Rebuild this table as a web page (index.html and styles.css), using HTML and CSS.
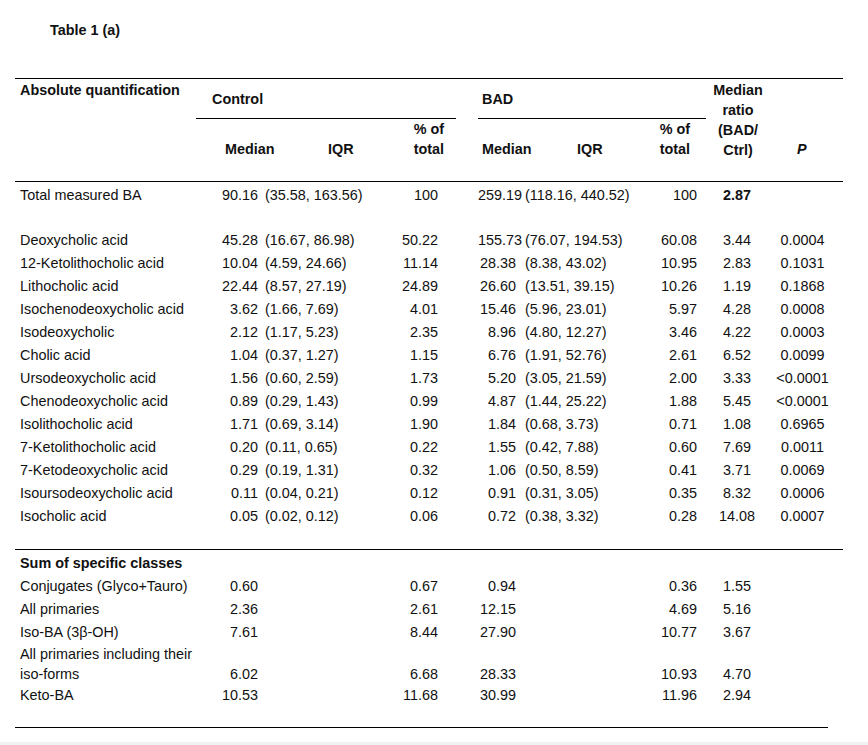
FILE: index.html
```html
<!DOCTYPE html>
<html lang="en">
<head>
<meta charset="utf-8">
<title>Table 1 (a)</title>
<link rel="stylesheet" href="styles.css">
</head>
<body>
<div class="page">
  <div class="title">Table 1 (a)</div>
  <table class="data">
    <colgroup>
      <col class="w-label"><col class="w-med"><col class="w-iqr"><col class="w-pct">
      <col class="w-gap"><col class="w-bmed"><col class="w-biqr"><col class="w-pct">
      <col class="w-ratio"><col class="w-p">
    </colgroup>
    <thead>
      <tr class="h1">
        <th rowspan="2" class="lbl-h">Absolute quantification</th>
        <th colspan="3" class="grp grp-ctrl">Control</th>
        <th rowspan="2"></th>
        <th colspan="3" class="grp grp-bad">BAD</th>
        <th rowspan="2" class="ratio-h">Median<br>ratio<br>(BAD/<br>Ctrl)</th>
        <th rowspan="2" class="p-h"><i>P</i></th>
      </tr>
      <tr class="h2">
        <th class="sub med-h">Median</th>
        <th class="sub iqr-h">IQR</th>
        <th class="sub pct-h">% of<br>total</th>
        <th class="sub bmed-h">Median</th>
        <th class="sub biqr-h">IQR</th>
        <th class="sub bpct-h">% of<br>total</th>
      </tr>
    </thead>
    <tbody class="main">
      <tr class="first">
        <td class="lbl">Total measured BA</td><td class="med">90.16</td><td class="iqr">(35.58, 163.56)</td><td class="pct">100</td>
        <td></td><td class="bmed">259.19</td><td class="biqr">(118.16, 440.52)</td><td class="bpct">100</td>
        <td class="ratio"><b>2.87</b></td><td class="p"></td>
      </tr>
      <tr class="gap1"><td colspan="10"></td></tr>
      <tr><td class="lbl">Deoxycholic acid</td><td class="med">45.28</td><td class="iqr">(16.67, 86.98)</td><td class="pct">50.22</td><td></td><td class="bmed">155.73</td><td class="biqr">(76.07, 194.53)</td><td class="bpct">60.08</td><td class="ratio">3.44</td><td class="p">0.0004</td></tr>
      <tr><td class="lbl">12-Ketolithocholic acid</td><td class="med">10.04</td><td class="iqr">(4.59, 24.66)</td><td class="pct">11.14</td><td></td><td class="bmed">28.38</td><td class="biqr">(8.38, 43.02)</td><td class="bpct">10.95</td><td class="ratio">2.83</td><td class="p">0.1031</td></tr>
      <tr><td class="lbl">Lithocholic acid</td><td class="med">22.44</td><td class="iqr">(8.57, 27.19)</td><td class="pct">24.89</td><td></td><td class="bmed">26.60</td><td class="biqr">(13.51, 39.15)</td><td class="bpct">10.26</td><td class="ratio">1.19</td><td class="p">0.1868</td></tr>
      <tr><td class="lbl">Isochenodeoxycholic acid</td><td class="med">3.62</td><td class="iqr">(1.66, 7.69)</td><td class="pct">4.01</td><td></td><td class="bmed">15.46</td><td class="biqr">(5.96, 23.01)</td><td class="bpct">5.97</td><td class="ratio">4.28</td><td class="p">0.0008</td></tr>
      <tr><td class="lbl">Isodeoxycholic</td><td class="med">2.12</td><td class="iqr">(1.17, 5.23)</td><td class="pct">2.35</td><td></td><td class="bmed">8.96</td><td class="biqr">(4.80, 12.27)</td><td class="bpct">3.46</td><td class="ratio">4.22</td><td class="p">0.0003</td></tr>
      <tr><td class="lbl">Cholic acid</td><td class="med">1.04</td><td class="iqr">(0.37, 1.27)</td><td class="pct">1.15</td><td></td><td class="bmed">6.76</td><td class="biqr">(1.91, 52.76)</td><td class="bpct">2.61</td><td class="ratio">6.52</td><td class="p">0.0099</td></tr>
      <tr><td class="lbl">Ursodeoxycholic acid</td><td class="med">1.56</td><td class="iqr">(0.60, 2.59)</td><td class="pct">1.73</td><td></td><td class="bmed">5.20</td><td class="biqr">(3.05, 21.59)</td><td class="bpct">2.00</td><td class="ratio">3.33</td><td class="p">&lt;0.0001</td></tr>
      <tr><td class="lbl">Chenodeoxycholic acid</td><td class="med">0.89</td><td class="iqr">(0.29, 1.43)</td><td class="pct">0.99</td><td></td><td class="bmed">4.87</td><td class="biqr">(1.44, 25.22)</td><td class="bpct">1.88</td><td class="ratio">5.45</td><td class="p">&lt;0.0001</td></tr>
      <tr><td class="lbl">Isolithocholic acid</td><td class="med">1.71</td><td class="iqr">(0.69, 3.14)</td><td class="pct">1.90</td><td></td><td class="bmed">1.84</td><td class="biqr">(0.68, 3.73)</td><td class="bpct">0.71</td><td class="ratio">1.08</td><td class="p">0.6965</td></tr>
      <tr><td class="lbl">7-Ketolithocholic acid</td><td class="med">0.20</td><td class="iqr">(0.11, 0.65)</td><td class="pct">0.22</td><td></td><td class="bmed">1.55</td><td class="biqr">(0.42, 7.88)</td><td class="bpct">0.60</td><td class="ratio">7.69</td><td class="p">0.0011</td></tr>
      <tr><td class="lbl">7-Ketodeoxycholic acid</td><td class="med">0.29</td><td class="iqr">(0.19, 1.31)</td><td class="pct">0.32</td><td></td><td class="bmed">1.06</td><td class="biqr">(0.50, 8.59)</td><td class="bpct">0.41</td><td class="ratio">3.71</td><td class="p">0.0069</td></tr>
      <tr><td class="lbl">Isoursodeoxycholic acid</td><td class="med">0.11</td><td class="iqr">(0.04, 0.21)</td><td class="pct">0.12</td><td></td><td class="bmed">0.91</td><td class="biqr">(0.31, 3.05)</td><td class="bpct">0.35</td><td class="ratio">8.32</td><td class="p">0.0006</td></tr>
      <tr><td class="lbl">Isocholic acid</td><td class="med">0.05</td><td class="iqr">(0.02, 0.12)</td><td class="pct">0.06</td><td></td><td class="bmed">0.72</td><td class="biqr">(0.38, 3.32)</td><td class="bpct">0.28</td><td class="ratio">14.08</td><td class="p">0.0007</td></tr>
      <tr class="gap2"><td colspan="10"></td></tr>
    </tbody>
    <tbody class="sums">
      <tr class="first"><td class="lbl" colspan="4"><b>Sum of specific classes</b></td><td colspan="6"></td></tr>
      <tr><td class="lbl">Conjugates (Glyco+Tauro)</td><td class="med">0.60</td><td></td><td class="pct">0.67</td><td></td><td class="bmed">0.94</td><td></td><td class="bpct">0.36</td><td class="ratio">1.55</td><td></td></tr>
      <tr><td class="lbl">All primaries</td><td class="med">2.36</td><td></td><td class="pct">2.61</td><td></td><td class="bmed">12.15</td><td></td><td class="bpct">4.69</td><td class="ratio">5.16</td><td></td></tr>
      <tr><td class="lbl">Iso-BA (3β-OH)</td><td class="med">7.61</td><td></td><td class="pct">8.44</td><td></td><td class="bmed">27.90</td><td></td><td class="bpct">10.77</td><td class="ratio">3.67</td><td></td></tr>
      <tr class="two"><td class="lbl">All primaries including their<br>iso-forms</td><td class="med">6.02</td><td></td><td class="pct">6.68</td><td></td><td class="bmed">28.33</td><td></td><td class="bpct">10.93</td><td class="ratio">4.70</td><td></td></tr>
      <tr><td class="lbl">Keto-BA</td><td class="med">10.53</td><td></td><td class="pct">11.68</td><td></td><td class="bmed">30.99</td><td></td><td class="bpct">11.96</td><td class="ratio">2.94</td><td></td></tr>
      <tr class="gap3"><td colspan="10"></td></tr>
    </tbody>
  </table>
  <div class="end-rule"></div>
  <div class="footer-band"></div>
</div>
</body>
</html>
```

FILE: styles.css
```css
html, body {
  margin: 0;
  padding: 0;
  background: #ffffff;
}

body {
  font-family: "Liberation Sans", Arial, sans-serif;
  font-size: 14.4px;
  color: #111111;
}

.page {
  width: 868px;
  height: 745px;
  position: relative;
  overflow: hidden;
}

.title {
  font-weight: bold;
  line-height: 20px;
  padding-top: 20px;
  margin-left: 50px;
}

.data {
  margin-top: 38px;
  margin-left: 15px;
  width: 828px;
  table-layout: fixed;
  border-collapse: collapse;
  border-top: 1px solid #000;
}

.w-label { width: 181px; }
.w-med { width: 64px; }
.w-iqr { width: 130px; }
.w-pct { width: 66px; }
.w-gap { width: 22px; }
.w-bmed { width: 41px; }
.w-biqr { width: 121px; }
.w-ratio { width: 64px; }
.w-p { width: 73px; }

th, td {
  padding: 0;
  white-space: nowrap;
  font-weight: normal;
}

thead th {
  font-weight: bold;
  line-height: 20px;
  text-align: left;
}

thead {
  border-bottom: 1px solid #000;
}

.h1 { height: 40px; }
.h2 { height: 63px; }

.lbl-h {
  vertical-align: top;
  padding-top: 1px;
  padding-left: 5px;
}

.grp {
  vertical-align: middle;
  border-bottom: 1px solid #000;
}
.grp-ctrl { padding-left: 16px; }
.grp-bad { padding-left: 4px; }

.ratio-h {
  vertical-align: top;
  text-align: center !important;
  padding-top: 1px;
}

.p-h {
  vertical-align: bottom;
  padding-bottom: 22px;
  padding-left: 27px;
}

.sub {
  vertical-align: bottom;
  padding-bottom: 22px;
}
.med-h { padding-left: 29px; }
.iqr-h { padding-left: 68px; }
.pct-h { text-align: right !important; padding-right: 12px; }
.bmed-h { padding-left: 4px; }
.biqr-h { padding-left: 58px; }
.bpct-h { text-align: right !important; padding-right: 16px; }

tbody td {
  line-height: 23px;
  height: 23px;
}

.first td { padding-top: 2px; }
.gap1 td { height: 22px; }
.gap2 td { height: 21px; }
.gap3 td { height: 20px; }

.sums {
  border-top: 1px solid #000;
}

.lbl { padding-left: 5px; }
.med { text-align: right; padding-right: 2px; }
.iqr { padding-left: 5px; }
.pct { text-align: right; padding-right: 18px; }
.bmed { text-align: right; padding-right: 3px; }
.biqr { padding-left: 6px; }
.bpct { text-align: right; padding-right: 9px; }
.ratio { text-align: center; padding-right: 2px; }
.p { text-align: center; padding-right: 8px; }

.two td {
  line-height: 20px;
  height: 40px;
  vertical-align: bottom;
}

.end-rule {
  margin-left: 15px;
  width: 813px;
  border-top: 1px solid #000;
}

.footer-band {
  position: absolute;
  left: 0;
  right: 0;
  bottom: 0;
  height: 3px;
  background: #f1f1f1;
}
```
